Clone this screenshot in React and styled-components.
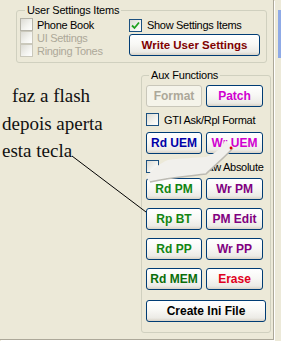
import React from "react";
import styled, { createGlobalStyle } from "styled-components";

const GlobalStyle = createGlobalStyle`
  html, body {
    margin: 0;
    padding: 0;
    background: #ece9d8;
  }
  body {
    font-family: "Liberation Sans", Arial, sans-serif;
  }
`;

const checkSettings = [
  { label: "Phone Book", tone: "#b5b3a8" },
  { label: "UI Settings", tone: "#cac8bb", disabled: true },
  { label: "Ringing Tones", tone: "#cac8bb", disabled: true },
];

const auxPairs = [
  [
    { text: "Rd PM", color: "#118511" },
    { text: "Wr PM", color: "#800080" },
  ],
  [
    { text: "Rp BT", color: "#118511" },
    { text: "PM Edit", color: "#800080" },
  ],
  [
    { text: "Rd PP", color: "#118511" },
    { text: "Wr PP", color: "#800080" },
  ],
  [
    { text: "Rd MEM", color: "#0a6e0a" },
    { text: "Erase", color: "#e00020" },
  ],
];

const Check = ({ on }) => (
  <svg width="9" height="9" viewBox="0 0 9 9">
    {on && (
      <polyline
        points="1,4.5 3.5,7 8,1.5"
        fill="none"
        stroke="#21a121"
        strokeWidth="1.8"
      />
    )}
  </svg>
);

const App = () => {
  return (
    <Window>
      <GlobalStyle />
      <Frame>
        <UserGroup>
          <Legend $indent={5}>User Settings Items</Legend>
          <UserBody>
            <Column>
              {checkSettings.map((c) => (
                <CheckRow key={c.label} $disabled={c.disabled} $gap={4}>
                  <Box $tone={c.tone} />
                  {c.label}
                </CheckRow>
              ))}
            </Column>
            <Column>
              <CheckRow $h={14}>
                <Box $tone="#1c5180">
                  <Check on />
                </Box>
                Show Settings Items
              </CheckRow>
              <WriteButton>Write User Settings</WriteButton>
            </Column>
          </UserBody>
        </UserGroup>

        <Lower>
          <Note>
            <NoteLine $indent={10}>faz a flash</NoteLine>
            <NoteLine>depois aperta</NoteLine>
            <NoteLine>esta tecla</NoteLine>
          </Note>

          <AuxGroup>
            <Legend $indent={3}>Aux Functions</Legend>
            <Pair>
              <Button disabled $color="#aca899">
                Format
              </Button>
              <Button $color="#d000d0">Patch</Button>
            </Pair>
            <CheckRow $mt={6}>
              <Box $tone="#1c5180" />
              GTI Ask/Rpl Format
            </CheckRow>
            <Pair $mt={6}>
              <Button $color="#0000a8">Rd UEM</Button>
              <Button $color="#d000d0">Wr UEM</Button>
            </Pair>
            <CheckRow $mt={6}>
              <Box $tone="#1c5180" />
              Format Raw Absolute
            </CheckRow>
            {auxPairs.map((pair, i) => (
              <Pair key={pair[0].text} $mt={i === 0 ? 5 : 8}>
                {pair.map((b) => (
                  <Button key={b.text} $color={b.color}>
                    {b.text}
                  </Button>
                ))}
              </Pair>
            ))}
            <WideButton $color="#000">Create Ini File</WideButton>
          </AuxGroup>
        </Lower>
      </Frame>

      <SideStrip>
        <StripMark />
      </SideStrip>

      <Overlay width="281" height="341" viewBox="0 0 281 341">
        {/* smudge left on the capture */}
        <path
          d="M146,177 C152,170 160,163 168,160 C182,158 196,158 206,157 C214,154 222,149 225,140 L233,148 C224,158 214,166 206,174 C190,176 172,177 150,182 Z"
          fill="#f1f0ec"
        />
        <path
          d="M150,182 C172,177 190,176 206,174 C214,166 224,158 233,148"
          fill="none"
          stroke="#bcbab2"
          strokeWidth="1.5"
        />
        <circle cx="231" cy="148" r="1.4" fill="#e00000" />
        <line x1="72" y1="156" x2="146" y2="212" stroke="#000" strokeWidth="1" />
      </Overlay>
    </Window>
  );
};

export default App;

const Window = styled.div`
  position: relative;
  display: flex;
  width: 281px;
  height: 341px;
  overflow: hidden;
  background: #ece9d8;
`;

const Frame = styled.div`
  display: flex;
  flex-direction: column;
  width: 274px;
  height: 340px;
  box-sizing: border-box;
  padding-top: 4px;
  border-right: 1px solid #aca899;
  border-bottom: 1px solid #aca899;
  box-shadow: 1px 1px 0 #ffffff;
`;

const SideStrip = styled.div`
  flex: 1;
  display: flex;
  flex-direction: column;
  align-items: flex-end;
  padding-top: 10px;
`;

const StripMark = styled.div`
  width: 3px;
  height: 48px;
  background: #8faae6;
`;

const Legend = styled.legend`
  padding: 0 2px;
  margin-left: ${(p) => p.$indent}px;
  font-size: 11px;
  line-height: 13px;
  letter-spacing: -0.2px;
  color: #000;
`;

const UserGroup = styled.fieldset`
  width: 251px;
  margin: 0 0 0 16px;
  min-width: 0;
  box-sizing: border-box;
  padding: 1px 3px 5px 3px;
  border: 1px solid #d0d0bf;
  border-radius: 3px;
`;

const UserBody = styled.div`
  display: grid;
  grid-template-columns: 109px 1fr;
`;

const Column = styled.div`
  display: flex;
  flex-direction: column;
`;

const CheckRow = styled.label`
  display: flex;
  align-items: center;
  gap: ${(p) => p.$gap || 5}px;
  height: ${(p) => p.$h || 13}px;
  margin-top: ${(p) => p.$mt || 0}px;
  font-size: 11px;
  letter-spacing: -0.3px;
  white-space: nowrap;
  color: ${(p) => (p.$disabled ? "#aca899" : "#000")};
`;

const Box = styled.span`
  display: flex;
  align-items: center;
  justify-content: center;
  flex: none;
  width: 11px;
  height: 11px;
  border: 1px solid ${(p) => p.$tone};
  background: linear-gradient(135deg, #dcdbd4 0%, #f4f4f0 60%, #ffffff 100%);
`;

const Button = styled.button`
  height: 22px;
  margin: 0;
  padding: 0;
  box-sizing: border-box;
  border: 1px solid ${(p) => (p.disabled ? "#c9c7ba" : "#003c74")};
  border-radius: 3px;
  background: ${(p) =>
    p.disabled
      ? "#f5f4ea"
      : "linear-gradient(180deg, #ffffff 0%, #f8f8f5 45%, #ecebe6 85%, #d8d2c6 100%)"};
  color: ${(p) => p.$color};
  font-family: "Liberation Sans", Arial, sans-serif;
  font-size: 12px;
  font-weight: bold;
  white-space: nowrap;
`;

const WriteButton = styled(Button)`
  width: 131px;
  margin-top: 2px;
  color: #800000;
  font-size: 11.5px;
`;

const WideButton = styled(Button)`
  width: 100%;
  margin-top: 10px;
`;

const Pair = styled.div`
  display: grid;
  grid-template-columns: 56px 57px;
  gap: 4px;
  margin-top: ${(p) => p.$mt || 0}px;
`;

const Lower = styled.div`
  display: flex;
  margin-top: 6px;
`;

const Note = styled.div`
  width: 141px;
  flex: none;
  box-sizing: border-box;
  padding: 13px 0 0 2px;
  font-family: "Liberation Serif", "Times New Roman", serif;
  font-size: 19px;
  line-height: 27.5px;
  color: #111;
`;

const NoteLine = styled.div`
  padding-left: ${(p) => p.$indent || 0}px;
  white-space: nowrap;
`;

const AuxGroup = styled.fieldset`
  display: flex;
  flex-direction: column;
  width: 130px;
  margin: 0;
  min-width: 0;
  box-sizing: border-box;
  padding: 3px 4px 10px 4px;
  border: 1px solid #d0d0bf;
  border-radius: 3px;
`;

const Overlay = styled.svg`
  position: absolute;
  left: 0;
  top: 0;
  pointer-events: none;
`;
